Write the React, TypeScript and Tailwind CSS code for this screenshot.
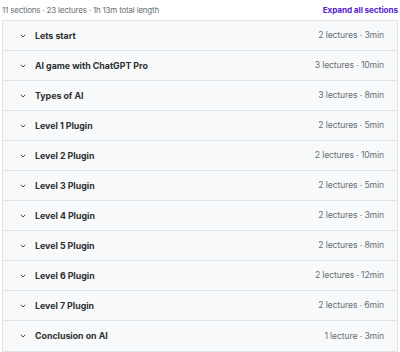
import { ChevronDown } from 'lucide-react';

const sections = [
  { title: 'Lets start', meta: '2 lectures · 3min' },
  { title: 'AI game with ChatGPT Pro', meta: '3 lectures · 10min' },
  { title: 'Types of AI', meta: '3 lectures · 8min' },
  { title: 'Level 1 Plugin', meta: '2 lectures · 5min' },
  { title: 'Level 2 Plugin', meta: '2 lectures · 10min' },
  { title: 'Level 3 Plugin', meta: '2 lectures · 5min' },
  { title: 'Level 4 Plugin', meta: '2 lectures · 3min' },
  { title: 'Level 5 Plugin', meta: '2 lectures · 8min' },
  { title: 'Level 6 Plugin', meta: '2 lectures · 12min' },
  { title: 'Level 7 Plugin', meta: '2 lectures · 6min' },
  { title: 'Conclusion on AI', meta: '1 lecture · 3min' },
];

export default function App() {
  return (
    <div className="w-[400px] h-[352px] bg-white overflow-hidden font-['Inter',sans-serif]">
      {/* Summary */}
      <div className="h-[20px] pl-[2px] pr-[2px] flex items-center justify-between">
        <span className="text-[8px] text-[#6a6f73] tracking-[-0.2px]">
          11 sections · 23 lectures · 1h 13m total length
        </span>
        <button className="text-[8.2px] font-bold text-[#5624d0] tracking-[-0.1px]">
          Expand all sections
        </button>
      </div>

      {/* Sections */}
      <div className="mx-[2px] border border-[#dfe3e6]">
        {sections.map((s, i) => (
          <div
            key={i}
            className={`h-[30px] bg-[#f7f9fa] flex items-center pl-[16px] pr-[13px] ${
              i < sections.length - 1 ? 'border-b border-[#dfe3e6]' : ''
            }`}
          >
            <ChevronDown size={8} strokeWidth={2.5} className="text-[#2d2f31]" />
            <span className="ml-[8px] text-[8.8px] font-bold text-[#2d2f31] flex-1">{s.title}</span>
            <span className="text-[8.6px] text-[#6a6f73] tracking-[-0.1px]">{s.meta}</span>
          </div>
        ))}
      </div>
    </div>
  );
}
